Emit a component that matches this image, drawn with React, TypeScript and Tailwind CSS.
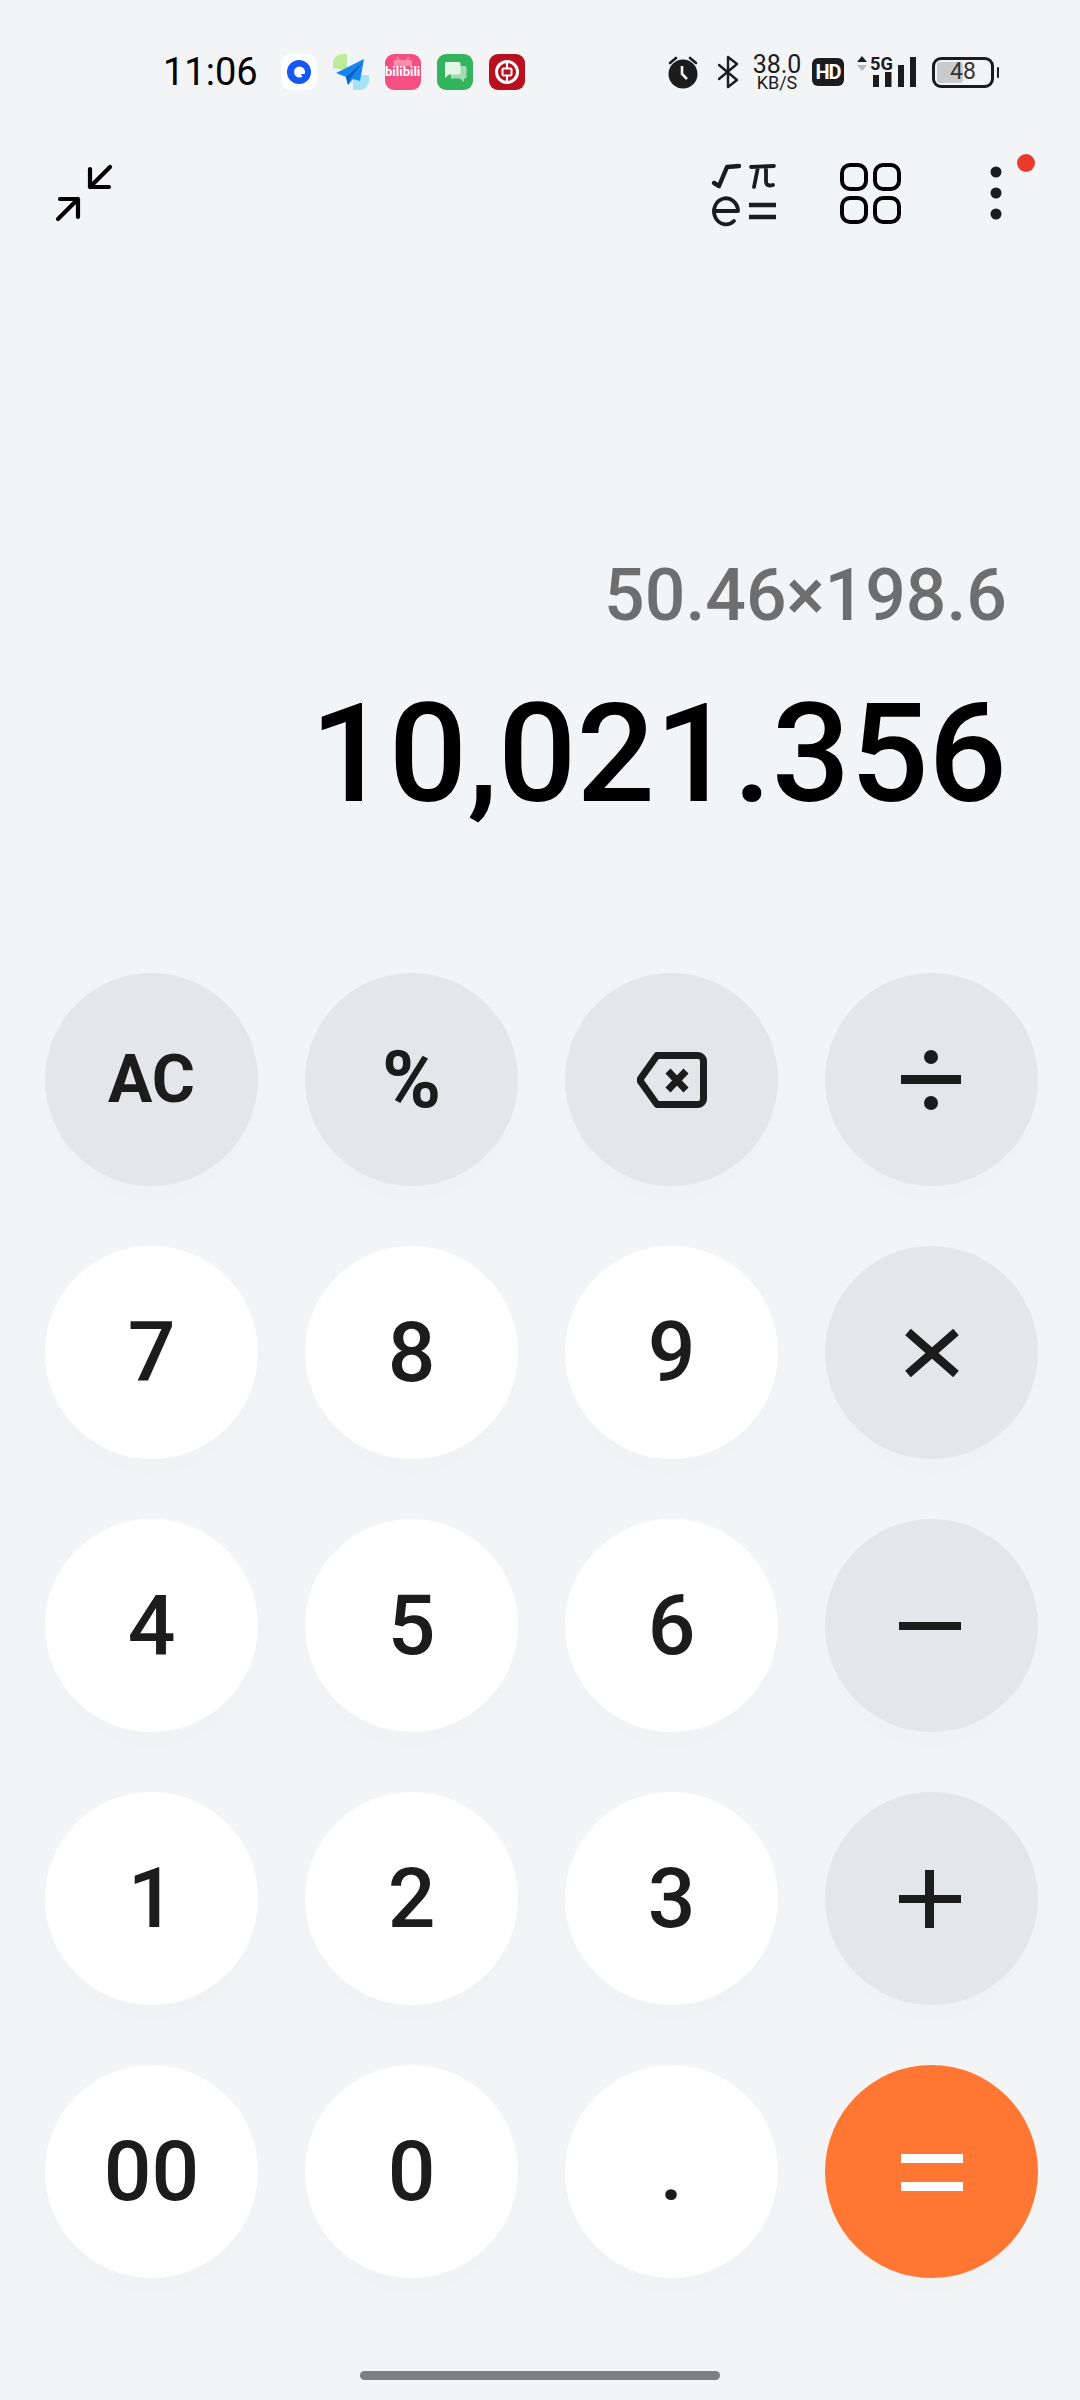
import React from 'react';

const keys = [
  { label: 'AC', kind: 'op', text: 'text-[66px] font-bold' },
  { label: '%', kind: 'op', text: 'text-[80px] font-bold' },
  { icon: 'back', kind: 'op' },
  { icon: 'div', kind: 'op' },
  { label: '7', kind: 'num' },
  { label: '8', kind: 'num' },
  { label: '9', kind: 'num' },
  { icon: 'mul', kind: 'op' },
  { label: '4', kind: 'num' },
  { label: '5', kind: 'num' },
  { label: '6', kind: 'num' },
  { icon: 'minus', kind: 'op' },
  { label: '1', kind: 'num' },
  { label: '2', kind: 'num' },
  { label: '3', kind: 'num' },
  { icon: 'plus', kind: 'op' },
  { label: '00', kind: 'num' },
  { label: '0', kind: 'num' },
  { label: '.', kind: 'num' },
  { icon: 'eq', kind: 'eq' },
];

function KeyIcon({ name }: { name: string }) {
  if (name === 'back') {
    return (
      <svg width="70" height="56" viewBox="0 0 70 56" fill="none" stroke="#1c1c1c" strokeWidth="7" strokeLinejoin="round" strokeLinecap="round">
        <path d="M20 3.5H61a5.5 5.5 0 0 1 5.5 5.5V47a5.5 5.5 0 0 1-5.5 5.5H20L4 30a3 3 0 0 1 0-4Z" />
        <path d="M31 19L49 38M49 19L31 38" strokeLinecap="butt" />
      </svg>
    );
  }
  const nudge = name === 'minus' || name === 'plus' ? 'mr-[3px]' : name === 'div' ? 'mr-[1px]' : '';
  return (
    <svg width="62" height="62" viewBox="0 0 62 62" className={nudge} fill={name === 'eq' ? '#fff' : '#1c1c1c'}>
      {name === 'div' && (
        <>
          <rect x="1" y="26" width="60" height="9" />
          <circle cx="31" cy="8" r="7" />
          <circle cx="31" cy="54" r="7" />
        </>
      )}
      {name === 'mul' && <path d="M7 10L31 31L55 10M7 52L31 31L55 52" fill="none" stroke="#1c1c1c" strokeWidth="8.5" />}
      {name === 'minus' && <rect x="0" y="27" width="62" height="8" />}
      {name === 'plus' && (
        <>
          <rect x="0" y="27" width="62" height="8" />
          <rect x="26" y="2" width="9" height="58" />
        </>
      )}
      {name === 'eq' && (
        <>
          <rect x="0" y="13" width="62" height="9" />
          <rect x="0" y="41" width="62" height="9" />
        </>
      )}
    </svg>
  );
}

function AppIcons() {
  return (
    <div className="flex items-center gap-4 ml-[23px]">
      <div className="w-9 h-9 rounded-[9px] bg-white flex items-center justify-center">
        <svg width="26" height="26" viewBox="0 0 26 26">
          <circle cx="13" cy="13" r="12" fill="#1557f0" />
          <circle cx="13.5" cy="13" r="5.5" fill="#fff" />
          <path d="M15 15L20 15L17 19Z" fill="#1557f0" />
        </svg>
      </div>
      <div className="w-9 h-9 rounded-[9px] bg-[#eef4fb] overflow-hidden">
        <svg width="36" height="36" viewBox="0 0 36 36">
          <path d="M0 3a3 3 0 0 1 3-3H14V16L0 14Z" fill="#bdeb97" />
          <path d="M20 21H36V30a6 6 0 0 1-6 6H20Z" fill="#a8e3f5" />
          <path d="M31 5L3 19L13 23L15 31L20 25L27 27Z" fill="#1785ee" />
          <path d="M13 23L30 8L17 25L15 31Z" fill="#0a5fc4" />
        </svg>
      </div>
      <div className="w-9 h-9 rounded-[9px] bg-[#f44f83] flex flex-col items-center">
        <svg width="20" height="9" viewBox="0 0 20 9" className="mt-[3px]">
          <rect x="1" y="3" width="18" height="6" rx="1.5" fill="#fb8fb0" />
          <path d="M6 3L4 0M14 3L16 0" stroke="#fb8fb0" strokeWidth="1.5" />
        </svg>
        <span className="text-[13px] leading-[13px] font-bold text-white -mt-[1px]">bilibili</span>
      </div>
      <div className="w-9 h-9 rounded-[9px] bg-[#35b45e] flex items-center justify-center">
        <svg width="24" height="24" viewBox="0 0 24 24">
          <path d="M8 6H22a1.5 1.5 0 0 1 1.5 1.5V17a1.5 1.5 0 0 1-1.5 1.5H21V22L17 18.5H8Z" fill="#9fdcb1" />
          <path d="M2 2H16a1.5 1.5 0 0 1 1.5 1.5V13a1.5 1.5 0 0 1-1.5 1.5H6L2 18Z" fill="#e4f5e8" />
        </svg>
      </div>
      <div className="w-9 h-9 rounded-[9px] bg-[#b8101f] flex items-center justify-center">
        <svg width="26" height="26" viewBox="0 0 26 26" fill="none" stroke="#fff">
          <circle cx="13" cy="13" r="10.5" strokeWidth="3" />
          <rect x="8.5" y="9.5" width="9" height="7" rx="1" strokeWidth="2" />
          <path d="M13 2V9M13 17V24" strokeWidth="2" />
        </svg>
      </div>
    </div>
  );
}

function StatusRight() {
  return (
    <div className="ml-auto flex items-center pr-[81px]">
      <svg width="34" height="34" viewBox="0 0 34 34" className="mr-[18px]">
        <circle cx="17" cy="19" r="14.5" fill="#1c1c1c" />
        <path d="M4 8L10 3M30 8L24 3" stroke="#1c1c1c" strokeWidth="2.6" strokeLinecap="round" />
        <path d="M16 11V19L21 24" stroke="#f3f4f6" strokeWidth="2.6" fill="none" />
      </svg>
      <svg width="21" height="34" viewBox="0 0 21 34" fill="none" stroke="#1c1c1c" strokeWidth="2.4" className="mr-[13px]">
        <path d="M1 10L19 25L10 32V2L19 9L1 24" strokeLinejoin="round" strokeLinecap="round" />
      </svg>
      <div className="flex flex-col items-center w-[50px] mr-[10px] text-[#1c1c1c]">
        <span className="block text-[25px] leading-[20px]">38.0</span>
        <span className="block text-[18px] leading-[15px]">KB/S</span>
      </div>
      <div className="w-8 h-7 rounded-[6px] bg-[#1c1c1c] text-white text-[20px] font-bold flex items-center justify-center mr-3 tracking-[-1px]">HD</div>
      <svg width="60" height="34" viewBox="0 0 60 34" className="mr-4 overflow-visible">
        <path d="M6 1L11 7H1Z" fill="#1c1c1c" />
        <path d="M1 10H11L6 16Z" fill="#b9b9b9" />
        <text x="14" y="15" fontFamily="Roboto, sans-serif" fontSize="19" fontWeight="700" fill="#1c1c1c" textLength="23" lengthAdjust="spacingAndGlyphs">5G</text>
        <rect x="17" y="20" width="6" height="12" fill="#1c1c1c" />
        <rect x="29" y="17" width="6.5" height="15" fill="#1c1c1c" />
        <rect x="42" y="10" width="6" height="22" fill="#1c1c1c" />
        <rect x="54" y="2" width="6" height="30" fill="#1c1c1c" />
      </svg>
      <div className="flex items-center">
        <div className="relative w-[62px] h-[31px] rounded-[9px] border-[3px] border-[#1c1c1c] flex items-center justify-center">
          <div className="absolute left-[2px] top-[2px] bottom-[2px] w-[26px] bg-[#c9cacc] rounded-[3px]" />
          <span className="relative text-[23px] text-[#333]">48</span>
        </div>
        <div className="w-[2px] h-[11px] bg-[#1c1c1c] ml-[3px] rounded-full" />
      </div>
    </div>
  );
}

function Toolbar() {
  return (
    <div className="h-[100px] flex items-center pl-[55px] pr-[40px]">
      <svg width="60" height="70" viewBox="25 19 60 70" fill="none" stroke="#000" strokeWidth="4.2" strokeLinecap="round" strokeLinejoin="round">
        <path d="M80 27L60 47M60 29V47H79" />
        <path d="M28 79L48 59M30 59H48V77" />
      </svg>
      <div className="ml-auto flex items-center">
        <svg width="70" height="70" viewBox="20 19 70 70" fill="none" stroke="#1c1c1c" strokeLinecap="round" strokeLinejoin="round" className="mr-[56px]">
          <path d="M24 43L29 46L37 27L49 26" strokeWidth="4.4" />
          <path d="M61 27L84 26M68 27L64 47M76 27V41Q76 47 83 45" strokeWidth="3.8" />
          <path d="M24.5 71H48A12 13 0 1 0 44 81" strokeWidth="3.8" />
          <path d="M59 65H86M59 77H86" strokeWidth="4.5" strokeLinecap="butt" />
        </svg>
        <svg width="68" height="70" viewBox="146 19 68 70" fill="none" stroke="#000" strokeWidth="4" className="mr-[86px]">
          <rect x="152" y="25" width="24" height="24" rx="8" />
          <rect x="185" y="25" width="24" height="24" rx="8" />
          <rect x="152" y="58" width="24" height="24" rx="8" />
          <rect x="185" y="58" width="24" height="24" rx="8" />
        </svg>
        <div className="relative w-[50px] h-[70px]">
          <svg width="50" height="70" viewBox="300 19 50 70" fill="#1c1c1c">
            <circle cx="306" cy="32" r="5.5" />
            <circle cx="306" cy="53" r="5.5" />
            <circle cx="306" cy="74" r="5.5" />
          </svg>
          <span className="absolute left-[27px] top-[-5px] w-[18px] h-[18px] rounded-full bg-[#ea3a2d]" />
        </div>
      </div>
    </div>
  );
}

export default function App() {
  return (
    <div className="w-[1080px] h-[2400px] bg-[#f3f4f6] overflow-hidden flex flex-col font-['Roboto',sans-serif]">
      <div className="h-[144px] flex items-center pl-[163px]">
        <span className="text-[38px] text-black leading-none">11:06</span>
        <AppIcons />
        <StatusRight />
      </div>
      <Toolbar />
      <div className="h-[729px] flex flex-col items-end pr-[73px] pt-[315px]">
        <div className="text-[71.5px] leading-[74px] font-medium text-[#6e6e6e]">50.46×198.6</div>
        <div className="text-[138px] leading-[150px] font-medium text-black mt-[46px]">10,021.356</div>
      </div>
      <div className="grid grid-cols-[repeat(4,213px)] gap-x-[47px] gap-y-[60px] pl-[45px]">
        {keys.map((k, i) => (
          <div
            key={i}
            className={
              'w-[213px] h-[213px] rounded-full flex items-center justify-center shadow-[0_24px_36px_rgba(0,0,0,0.01)] ' +
              (k.kind === 'num' ? 'bg-white' : k.kind === 'eq' ? 'bg-[#ff7733]' : 'bg-[#e5e6e9]')
            }
          >
            {k.icon ? (
              <KeyIcon name={k.icon} />
            ) : (
              <span className={'text-[#1c1c1c] leading-none ' + (k.text ?? 'text-[84px] font-medium')}>{k.label}</span>
            )}
          </div>
        ))}
      </div>
      <div className="mt-[93px] mx-auto w-[360px] h-[9px] rounded-full bg-[#7e7f80]" />
    </div>
  );
}
